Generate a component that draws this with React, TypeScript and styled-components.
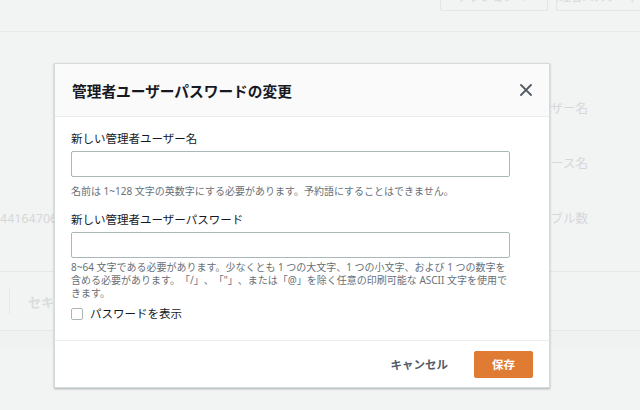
import React, { useState } from "react";
import styled, { createGlobalStyle } from "styled-components";

const GlobalStyle = createGlobalStyle`
  html, body {
    margin: 0;
    padding: 0;
    background: #f2f3f3;
  }
  body {
    font-family: "Noto Sans", "Noto Sans CJK JP", sans-serif;
    text-spacing-trim: space-all;
  }
  * {
    box-sizing: border-box;
  }
`;

const Page = styled.div`
  position: relative;
  width: 640px;
  height: 410px;
  overflow: hidden;
  background: #f2f3f3;
  color: #cdd1d2;
`;

/* ---------- page behind the dialog (dimmed) ---------- */

const TopBar = styled.div`
  height: 32px;
  display: flex;
  align-items: flex-end;
  gap: 8px;
  padding: 0 0 20px 440px;
  overflow: hidden;
  border-bottom: 1px solid #e8eaea;
`;

const GhostButton = styled.div<{ $width: number }>`
  width: ${(p) => p.$width}px;
  height: 30px;
  flex-shrink: 0;
  display: flex;
  align-items: flex-end;
  justify-content: center;
  padding-bottom: 5px;
  border: 1px solid #e3e6e6;
  border-radius: 2px;
  font-size: 11.5px;
  line-height: 16px;
  font-weight: 700;
  color: #dcdfe0;
  white-space: nowrap;
  overflow: hidden;
`;

const DetailGrid = styled.div`
  display: grid;
  grid-template-columns: 250px 220px 1fr;
  height: 240px;
  padding-top: 69px;
  border-bottom: 1px solid #e6e8e8;
`;

const DetailColumn = styled.div<{ $padRight?: number }>`
  display: flex;
  flex-direction: column;
  gap: 39px;
  padding-right: ${(p) => p.$padRight || 0}px;
  font-size: 12.5px;
  color: #d5d8d9;
`;

const DetailValue = styled.div<{ $align?: string }>`
  height: 16px;
  line-height: 16px;
  white-space: nowrap;
  text-align: ${(p) => p.$align || "left"};
`;

const TabRow = styled.div`
  height: 59px;
  display: flex;
  align-items: center;
  border-bottom: 1px solid #e6e8e8;
`;

const TabDivider = styled.div`
  width: 1px;
  height: 26px;
  margin-left: 9px;
  background: #e6e8e8;
`;

const TabLabel = styled.div`
  margin-left: 18px;
  font-size: 13px;
  font-weight: 700;
  color: #dadddd;
`;

const LowerBand = styled.div`
  height: 16px;
  background: #f0f1f1;
`;

/* ---------- dialog ---------- */

const Modal = styled.div`
  position: absolute;
  top: 63px;
  left: 54px;
  width: 496px;
  background: #fff;
  border: 1px solid #d5dbdb;
  box-shadow: 0 1px 2px rgba(0, 28, 36, 0.3);
  color: #16191f;
`;

const ModalHeader = styled.div`
  height: 53px;
  display: flex;
  align-items: center;
  justify-content: space-between;
  padding: 0 15px 0 17px;
  background: #fafafa;
  border-bottom: 1px solid #eaeded;
`;

const Title = styled.h2`
  margin: 0;
  font-size: 14.7px;
  font-weight: 700;
  color: #16191f;
`;

const CloseButton = styled.button`
  width: 16px;
  height: 16px;
  padding: 0;
  border: none;
  background: none;
  display: flex;
  align-items: center;
  justify-content: center;
  cursor: pointer;
  color: #545b64;
`;

const ModalBody = styled.div`
  padding: 14px 39px 18px 16px;
  display: flex;
  flex-direction: column;
`;

const Field = styled.div<{ $gapTop?: number }>`
  display: flex;
  flex-direction: column;
  margin-top: ${(p) => p.$gapTop || 0}px;
`;

const Label = styled.label`
  font-size: 11.5px;
  line-height: 16px;
  color: #16191f;
  margin-bottom: 4px;
`;

const TextInput = styled.input`
  width: 439px;
  height: 26px;
  border: 1px solid #aab7b8;
  border-radius: 2px;
  padding: 0 8px;
  font-size: 12px;
  font-family: inherit;
  background: #fff;
  outline: none;
`;

const Hint = styled.p<{ $top: number }>`
  margin: ${(p) => p.$top}px 0 0;
  font-size: 10px;
  line-height: 13px;
  color: #687078;
  width: 440px;
`;

const CheckRow = styled.label`
  display: flex;
  align-items: center;
  gap: 7px;
  margin-top: 6px;
  font-size: 11.5px;
  line-height: 16px;
  color: #16191f;
  cursor: pointer;
`;

const CheckBox = styled.input`
  appearance: none;
  width: 12px;
  height: 12px;
  margin: 0;
  border: 1px solid #aab7b8;
  border-radius: 2px;
  background: #fff;
`;

const ModalFooter = styled.div`
  height: 47px;
  display: flex;
  align-items: center;
  justify-content: flex-end;
  gap: 13px;
  padding: 0 16px;
  border-top: 1px solid #eaeded;
`;

const FooterButton = styled.button<{ $primary?: boolean }>`
  height: 27px;
  padding: 0 ${(p) => (p.$primary ? 17 : 12)}px;
  border: 1px solid ${(p) => (p.$primary ? "#e07b33" : "transparent")};
  border-radius: 2px;
  background: ${(p) => (p.$primary ? "#e07b33" : "transparent")};
  color: ${(p) => (p.$primary ? "#fff" : "#545b64")};
  font-family: inherit;
  font-size: 11.5px;
  font-weight: 700;
  cursor: pointer;
`;

function CloseIcon() {
  return (
    <svg width="12" height="12" viewBox="0 0 12 12" fill="none">
      <path
        d="M1 1L11 11M11 1L1 11"
        stroke="currentColor"
        strokeWidth="1.8"
        strokeLinecap="round"
      />
    </svg>
  );
}

export default function App() {
  const [userName, setUserName] = useState("");
  const [password, setPassword] = useState("");
  const [showPassword, setShowPassword] = useState(false);

  return (
    <Page>
      <GlobalStyle />

      <TopBar>
        <GhostButton $width={108}>アクション ▼</GhostButton>
        <GhostButton $width={110}>管理者パスワードの変更</GhostButton>
      </TopBar>

      <DetailGrid>
        <DetailColumn>
          <DetailValue />
          <DetailValue />
          <DetailValue>44164706</DetailValue>
        </DetailColumn>
        <DetailColumn />
        <DetailColumn $padRight={52}>
          <DetailValue $align="right">マスターユーザー名</DetailValue>
          <DetailValue $align="right">データベース名</DetailValue>
          <DetailValue $align="right">テーブル数</DetailValue>
        </DetailColumn>
      </DetailGrid>

      <TabRow>
        <TabDivider />
        <TabLabel>セキュリティ</TabLabel>
      </TabRow>
      <LowerBand />

      <Modal role="dialog" aria-label="管理者ユーザーパスワードの変更">
        <ModalHeader>
          <Title>管理者ユーザーパスワードの変更</Title>
          <CloseButton aria-label="閉じる">
            <CloseIcon />
          </CloseButton>
        </ModalHeader>

        <ModalBody>
          <Field>
            <Label htmlFor="admin-user">新しい管理者ユーザー名</Label>
            <TextInput
              id="admin-user"
              value={userName}
              onChange={(e) => setUserName(e.target.value)}
            />
            <Hint $top={8}>
              名前は 1~128 文字の英数字にする必要があります。予約語にすることはできません。
            </Hint>
          </Field>

          <Field $gapTop={14}>
            <Label htmlFor="admin-pass">新しい管理者ユーザーパスワード</Label>
            <TextInput
              id="admin-pass"
              type={showPassword ? "text" : "password"}
              value={password}
              onChange={(e) => setPassword(e.target.value)}
            />
            <Hint $top={3}>
              8~64 文字である必要があります。少なくとも 1 つの大文字、1 つの小文字、および 1 つの数字を含める必要があります。「/」、「"」、または「@」を除く任意の印刷可能な ASCII 文字を使用できます。
            </Hint>
          </Field>

          <CheckRow>
            <CheckBox
              type="checkbox"
              checked={showPassword}
              onChange={(e) => setShowPassword(e.target.checked)}
            />
            パスワードを表示
          </CheckRow>
        </ModalBody>

        <ModalFooter>
          <FooterButton>キャンセル</FooterButton>
          <FooterButton $primary>保存</FooterButton>
        </ModalFooter>
      </Modal>
    </Page>
  );
}
